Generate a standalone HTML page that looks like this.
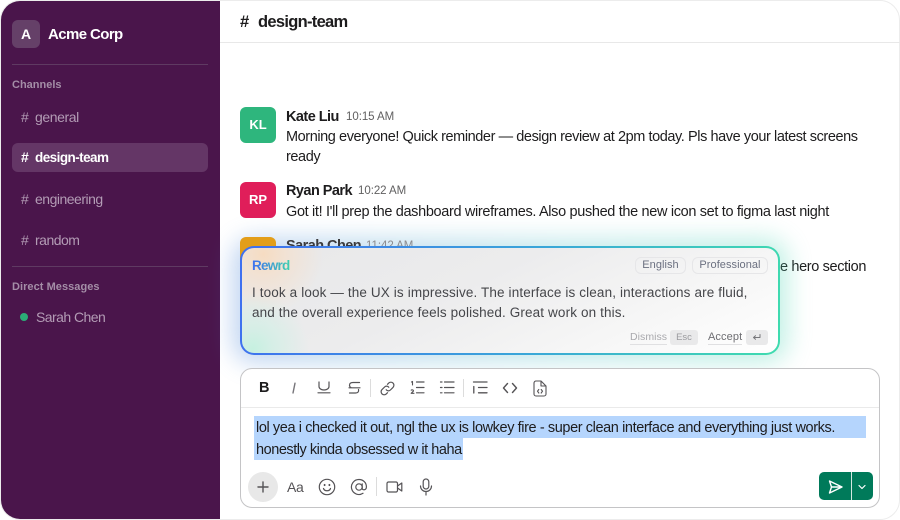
<!DOCTYPE html>
<html><head><meta charset="utf-8"><style>
*{box-sizing:border-box;margin:0;padding:0}
html,body{width:900px;height:520px;background:#fff;overflow:hidden;font-family:"Liberation Sans",sans-serif}
.t{position:absolute;white-space:nowrap;line-height:20px}
#app{position:absolute;left:0;top:0;width:900px;height:520px;border-radius:20px;border:1px solid #ececec;overflow:hidden;background:#fff}
#side{position:absolute;left:-1px;top:-1px;width:220px;height:520px;background:#4a154b}
.hr{position:absolute;left:12px;width:196px;height:1px;background:#5f3a62}
.ch{color:#b39cb5;font-size:14px}
.av{position:absolute;left:240px;width:36px;height:36px;border-radius:6px;color:#fff;font-weight:bold;font-size:13px;text-align:center;line-height:36px}
.n{font-weight:bold;font-size:14.5px;color:#1d1c1d;letter-spacing:-.55px}
.tm{font-size:11.5px;color:#616061;letter-spacing:-.05px}
.m{font-size:14.5px;color:#1d1c1d;letter-spacing:-.42px}
svg{position:absolute;fill:none;stroke:#555356;stroke-width:1.2;stroke-linecap:round;stroke-linejoin:round}
.tag{position:absolute;top:257px;height:17px;border:1px solid #e6e6e8;border-radius:6px;font-size:11px;line-height:15px;text-align:center;color:#6b7080;letter-spacing:.05px}
.sel{position:absolute;background:#b5d5fd;height:22px}
</style></head><body>
<div id="app">
<div id="side"></div>
</div>
<div style="position:absolute;left:12px;top:20px;width:28px;height:28px;border-radius:6px;background:#654068;color:#fff;font-weight:bold;font-size:14px;line-height:28px;text-align:center">A</div>
<div class="t" style="left:48px;top:25px;color:#fff;font-weight:bold;font-size:15px;letter-spacing:-.6px">Acme Corp</div>
<div class="hr" style="top:64px"></div>
<div class="t" style="left:12px;top:75px;color:#a48ea7;font-weight:bold;font-size:11px;letter-spacing:0">Channels</div>
<div class="t ch" style="left:21px;top:107px">#</div><div class="t ch" style="left:35px;top:107px;letter-spacing:-.42px">general</div>
<div style="position:absolute;left:12px;top:143px;width:196px;height:29px;border-radius:6px;background:#643666"></div>
<div class="t" style="left:21px;top:147px;color:#fff;font-size:14px;font-weight:bold">#</div><div class="t" style="left:35px;top:148px;color:#fff;font-size:13.5px;font-weight:bold;letter-spacing:-.55px">design-team</div>
<div class="t ch" style="left:21px;top:189px">#</div><div class="t ch" style="left:35px;top:189px;letter-spacing:-.5px">engineering</div>
<div class="t ch" style="left:21px;top:230px">#</div><div class="t ch" style="left:35px;top:230px;letter-spacing:-.5px">random</div>
<div class="hr" style="top:266px"></div>
<div class="t" style="left:12px;top:277px;color:#a48ea7;font-weight:bold;font-size:11px;letter-spacing:.05px">Direct Messages</div>
<div style="position:absolute;left:20px;top:313px;width:8px;height:8px;border-radius:50%;background:#2bac76"></div>
<div class="t ch" style="left:36px;top:307px;letter-spacing:-.55px">Sarah Chen</div>

<div style="position:absolute;left:220px;top:42px;width:680px;height:1px;background:#e8e8e8"></div>
<div class="t" style="left:240px;top:12px;font-size:16.5px;font-weight:bold;color:#1d1c1d">#</div>
<div class="t" style="left:258px;top:12px;font-size:16.5px;font-weight:bold;color:#1d1c1d;letter-spacing:-.7px">design-team</div>

<div class="av" style="top:107px;background:#2eb67d">KL</div>
<div class="t n" style="left:286px;top:106.5px">Kate Liu</div><div class="t tm" style="left:346px;top:106.5px">10:15 AM</div>
<div class="t m" style="left:286px;top:127px">Morning everyone! Quick reminder — design review at 2pm today. Pls have your latest screens</div>
<div class="t m" style="left:286px;top:147px">ready</div>
<div class="av" style="top:182px;background:#e01e5a">RP</div>
<div class="t n" style="left:286px;top:181px">Ryan Park</div><div class="t tm" style="left:358px;top:181px">10:22 AM</div>
<div class="t m" style="left:286px;top:202px;letter-spacing:-.34px">Got it! I'll prep the dashboard wireframes. Also pushed the new icon set to figma last night</div>
<div class="t m" style="left:780px;top:257px;letter-spacing:-.36px">e hero section</div>

<div style="position:absolute;left:232px;top:238px;width:556px;height:125px;border-radius:22px;background:linear-gradient(90deg,#4f86d8,#5cc4c8 60%,#4fd6b4);opacity:.34;filter:blur(12px)"></div>
<div class="av" style="top:237px;background:#e39e1a"></div>
<div class="t n" style="left:286px;top:236px;color:#3a3a3c">Sarah Chen</div><div class="t tm" style="left:366px;top:236px;color:#8a8a8e">11:42 AM</div>
<div style="position:absolute;left:240px;top:246px;width:540px;height:109px;border-radius:14px;background:linear-gradient(100deg,#3f6ff0,#3aa7d8 55%,#3fdcae);padding:2px">
<div style="position:relative;width:100%;height:100%;border-radius:12px;overflow:hidden;background:radial-gradient(circle at 2% 96%,#c6f0e0 0,rgba(205,240,228,.7) 20px,rgba(220,240,235,0) 56px),radial-gradient(circle at 4% 6%,#f6dcc2 0,rgba(246,222,200,.65) 22px,rgba(240,225,215,0) 60px),linear-gradient(155deg,#e8e8e9 0%,#ececed 40%,#f6f6f6 72%,#fff 100%)">
</div></div>
<div class="t" style="left:252px;top:256px;font-size:13.5px;font-weight:bold;letter-spacing:-.75px;background:linear-gradient(90deg,#3f6ff0,#3fd0b0);-webkit-background-clip:text;background-clip:text;color:transparent">Rewrd</div>
<div class="tag" style="left:635px;width:51px">English</div>
<div class="tag" style="left:692px;width:76px">Professional</div>
<div class="t" style="left:252px;top:283px;font-size:13.5px;color:#45464a;letter-spacing:.13px">I took a look — the UX is impressive. The interface is clean, interactions are fluid,</div>
<div class="t" style="left:252px;top:303px;font-size:13.5px;color:#45464a;letter-spacing:.13px">and the overall experience feels polished. Great work on this.</div>
<div class="t" style="left:630px;top:329px;font-size:10.5px;color:#a9a9ad;border-bottom:1px solid #e0e0e2;line-height:16px;height:16px;letter-spacing:.05px">Dismiss</div>
<div style="position:absolute;left:670px;top:330px;width:28px;height:15px;border-radius:3px;background:#e9e9ea;font-size:9.5px;color:#9a9a9e;text-align:center;line-height:16px">Esc</div>
<div class="t" style="left:708px;top:329px;font-size:11px;color:#6e6e72;border-bottom:1px solid #e0e0e2;line-height:16px;height:16px;letter-spacing:.1px">Accept</div>
<div style="position:absolute;left:746px;top:330px;width:22px;height:15px;border-radius:3px;background:#e9e9ea"></div>
<svg style="left:752px;top:333px;stroke:#77777b;stroke-width:1" width="10" height="9" viewBox="0 0 10 9"><path d="M8 1.5V4.5H1.5M3.5 2.7L1.5 4.5L3.5 6.3"/></svg>

<div style="position:absolute;left:240px;top:368px;width:640px;height:140px;border-radius:12px;border:1px solid #c4c4c6;background:#fff"></div>
<div style="position:absolute;left:241px;top:407px;width:638px;height:1px;background:#eaeaea"></div>
<div style="position:absolute;left:370px;top:379px;width:1px;height:18px;background:#dcdcdc"></div>
<div style="position:absolute;left:463px;top:379px;width:1px;height:18px;background:#dcdcdc"></div>
<div class="t" style="left:259px;top:378px;font-size:14.5px;font-weight:bold;color:#1d1c1d">B</div>
<svg style="left:288px;top:380px;stroke:#77757a;stroke-width:1.4" width="12" height="16" viewBox="0 0 12 16"><path d="M7 3.2L5 13"/></svg>
<svg style="left:316px;top:380px" width="16" height="16" viewBox="0 0 16 16"><path d="M3 2V6.5A5 3.5 0 0 0 13 6.5V2M2 12.8H14"/></svg>
<svg style="left:346px;top:380px" width="16" height="16" viewBox="0 0 16 16"><path d="M13.5 2.5H7C4.5 2.5 3.5 3.5 3.5 5.2C3.5 6.5 4 7 5 7.5M3 7.8H14M12.5 9.5C13 11.5 12 13 9.5 13H3.5"/></svg>
<svg style="left:379px;top:380px" width="17" height="17" viewBox="0 0 17 17"><path d="M7.2 9.8A2.8 2.8 0 0 0 11.4 10L14 7.4A3 3 0 0 0 9.7 3.1L8.5 4.3M9.8 7.2A2.8 2.8 0 0 0 5.6 7L3 9.6A3 3 0 0 0 7.3 13.9L8.5 12.7"/></svg>
<svg style="left:409px;top:380px" width="16" height="16" viewBox="0 0 16 16"><path d="M7.5 2H15M7.5 7.5H15M7.5 12.8H15"/><path d="M2.5 2L3.5 1.5V5M2.2 10.2C3 9.5 5 10 4.3 11.2L2.2 13.3H5" stroke-width="1.1"/></svg>
<svg style="left:439px;top:380px" width="16" height="16" viewBox="0 0 16 16"><path d="M5.5 2H15M5.5 7.5H15M5.5 12.8H15M1.5 2H3M1.5 7.5H3M1.5 12.8H3"/></svg>
<svg style="left:472px;top:380px" width="16" height="16" viewBox="0 0 16 16"><path d="M1.5 2H15M6.5 7.5H15M6.5 12.8H15M1.8 6.5V13" stroke-width="1.3"/></svg>
<svg style="left:502px;top:380px" width="16" height="16" viewBox="0 0 16 16"><path d="M5.5 3.5L1.5 8L5.5 12.5M10.5 3.5L14.5 8L10.5 12.5" stroke-width="1.4"/></svg>
<svg style="left:533px;top:380px" width="14" height="17" viewBox="0 0 14 17"><path d="M8 1H3A2 2 0 0 0 1 3V14A2 2 0 0 0 3 16H11A2 2 0 0 0 13 14V6L8 1ZM8 1V6H13M5.8 9.5L4.5 11.2L5.8 13M8.2 9.5L9.5 11.2L8.2 13" stroke-width="1.1"/></svg>

<div class="sel" style="left:254px;top:416px;width:612px"></div>
<div class="sel" style="left:254px;top:438px;width:209px"></div>
<div class="t m" style="left:256px;top:418px;letter-spacing:-.4px">lol yea i checked it out, ngl the ux is lowkey fire - super clean interface and everything just works.</div>
<div class="t m" style="left:256px;top:440px;letter-spacing:-.46px">honestly kinda obsessed w it haha</div>

<div style="position:absolute;left:248px;top:472px;width:30px;height:30px;border-radius:50%;background:#e8e8e8"></div>
<svg style="left:257px;top:481px;stroke-width:1.4" width="12" height="12" viewBox="0 0 12 12"><path d="M6 1V11M1 6H11"/></svg>
<div class="t" style="left:287px;top:477px;font-size:14px;color:#555356;letter-spacing:-.3px">Aa</div>
<svg style="left:318px;top:478px" width="18" height="18" viewBox="0 0 18 18"><circle cx="9" cy="9" r="7.7"/><path d="M5.5 10.5C6.5 13.5 11.5 13.5 12.5 10.5"/><path d="M6.6 6.8V7.2M11.4 6.8V7.2" stroke-width="1.8"/></svg>
<svg style="left:350px;top:478px" width="18" height="18" viewBox="0 0 18 18"><circle cx="9" cy="9" r="3.2"/><path d="M12.2 5.8V10.2C12.2 12.6 16.3 12.4 16.4 9C16.5 4.5 13 1.5 9 1.5A7.5 7.5 0 1 0 13 15.3"/></svg>
<div style="position:absolute;left:376px;top:477px;width:1px;height:19px;background:#dcdcdc"></div>
<svg style="left:386px;top:480px" width="17" height="14" viewBox="0 0 17 14"><rect x="1" y="2" width="10.5" height="10" rx="1.5"/><path d="M11.5 6L15.8 3V11L11.5 8"/></svg>
<svg style="left:419px;top:478px" width="14" height="18" viewBox="0 0 14 18"><rect x="4.2" y="1" width="5.6" height="10" rx="2.8"/><path d="M1.5 8A5.5 5.5 0 0 0 12.5 8M7 13.5V17"/></svg>

<div style="position:absolute;left:819px;top:472px;width:54px;height:28px;border-radius:5px;background:#007a5a"></div>
<div style="position:absolute;left:851px;top:472px;width:1px;height:28px;background:#d5e8e2"></div>
<svg style="left:828px;top:480px;stroke:#fff;stroke-width:1.4" width="15" height="14" viewBox="0 0 15 14"><path d="M1.5 1L14 7L1.5 13L3.5 7L1.5 1ZM3.5 7H14"/></svg>
<svg style="left:858px;top:484px;stroke:#fff;stroke-width:1.2" width="8" height="6" viewBox="0 0 8 6"><path d="M1 1.5L4 4.5L7 1.5"/></svg>
</body></html>
